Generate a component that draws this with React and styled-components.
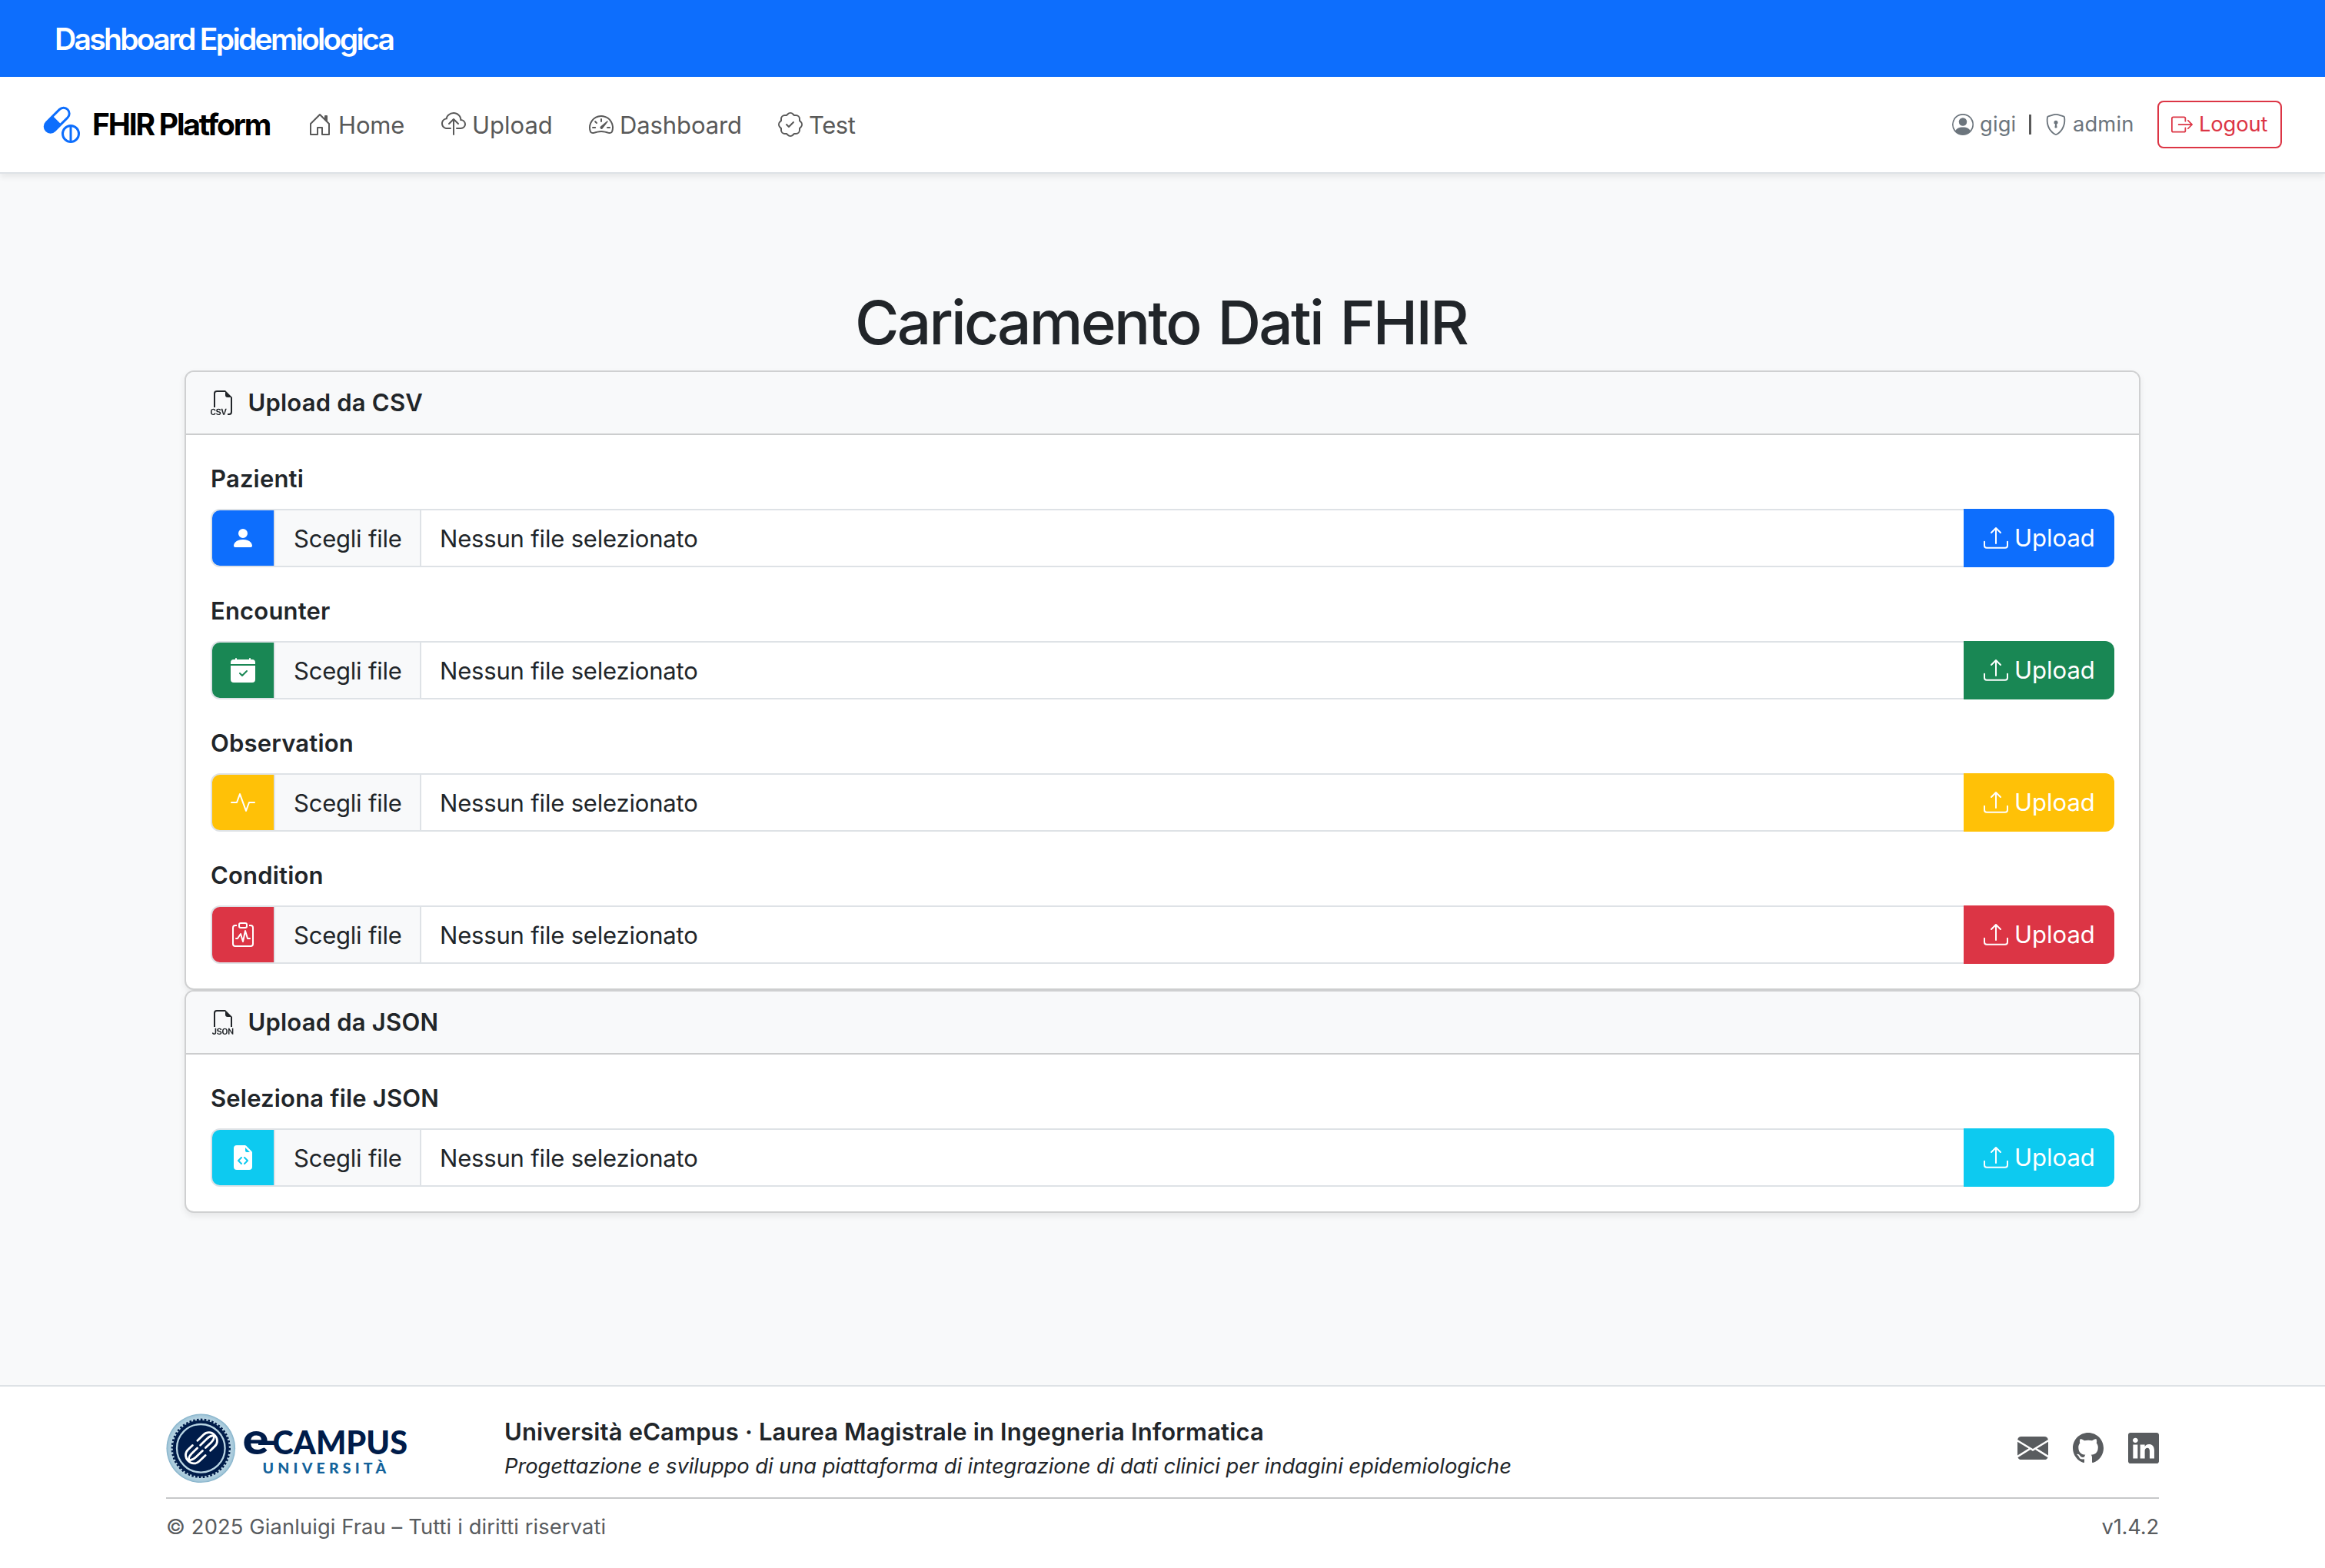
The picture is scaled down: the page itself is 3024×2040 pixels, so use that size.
import React from 'react';
import styled, { createGlobalStyle } from 'styled-components';
import {
  BsCapsulePill,
  BsHouseDoor,
  BsCloudUpload,
  BsSpeedometer2,
  BsPatchCheck,
  BsPersonCircle,
  BsShieldLock,
  BsBoxArrowRight,
  BsFiletypeCsv,
  BsFiletypeJson,
  BsPersonFill,
  BsCalendarCheckFill,
  BsActivity,
  BsClipboardPulse,
  BsFileEarmarkCodeFill,
  BsUpload,
  BsEnvelopeFill,
  BsGithub,
  BsLinkedin,
} from 'react-icons/bs';

const GlobalStyle = createGlobalStyle`
  *, *::before, *::after { box-sizing: border-box; }
  body {
    margin: 0;
    background: #f8f9fa;
    color: #212529;
    font-family: Inter, "Liberation Sans", sans-serif;
    font-size: 31px;
    line-height: 48px;
  }
  svg { display: block; flex: none; }
`;

const Page = styled.div`
  display: flex;
  flex-direction: column;
  min-height: 2040px;
`;

const TopBar = styled.div`
  display: flex;
  align-items: center;
  height: 100px;
  padding: 2px 71px 0;
  background: #0d6efd;
  color: #fff;
  font-size: 39px;
  font-weight: 600;
  letter-spacing: -2.67px;
`;

const Navbar = styled.nav`
  display: flex;
  align-items: center;
  height: 126px;
  padding: 0 56px;
  background: #fff;
  border-bottom: 2px solid #dee2e6;
  box-shadow: 0 4px 8px rgba(0, 0, 0, 0.075);
`;

const Brand = styled.a`
  display: flex;
  align-items: center;
  gap: 16px;
  width: 344px;
  color: #000;
  font-size: 39px;
  font-weight: 700;
  letter-spacing: -2.2px;
  white-space: nowrap;
  svg { color: #0d6efd; width: 48px; height: 48px; }
`;

const NavLink = styled.a`
  display: flex;
  align-items: center;
  gap: 8px;
  width: ${(p) => p.$width}px;
  color: #595959;
  letter-spacing: ${(p) => p.$tracking || 0}px;
  svg { width: 32px; height: 32px; }
`;

const LinkText = styled.span`
  padding-top: 1px;
`;

const Session = styled.div`
  display: flex;
  align-items: center;
  margin-left: auto;
  font-size: 27.3px;
  color: #595959;
`;

const SessionItem = styled.span`
  display: flex;
  align-items: center;
  gap: 8px;
  width: ${(p) => p.$width}px;
  color: #6c757d;
  letter-spacing: 0.15px;
  svg { width: 28px; height: 28px; }
`;

const Divider = styled.span`
  width: 24px;
  height: 26px;
  padding: 0 0 0 3px;
  &::before {
    content: "";
    display: block;
    width: 3px;
    height: 26px;
    background: #595959;
  }
`;

const LogoutButton = styled.button`
  display: flex;
  align-items: center;
  gap: 8px;
  width: 162px;
  height: 62px;
  padding: 0 0 0 16px;
  border: 2px solid #dc3545;
  border-radius: 8px;
  background: transparent;
  color: #dc3545;
  font: inherit;
  letter-spacing: -0.1px;
  svg { width: 28px; height: 28px; }
`;

const Main = styled.main`
  flex: 1;
  width: 2592px;
  margin: 0 auto;
  padding: 144px 24px 0;
`;

const Title = styled.h1`
  margin: 0 0 16px;
  padding: 3px 4px 0 0;
  font-size: 78.4px;
  font-weight: 500;
  line-height: 93px;
  letter-spacing: -2.8px;
  word-spacing: 4.5px;
  text-align: center;
`;

const Card = styled.section`
  border: 2px solid #cfd0d1;
  border-radius: 12px;
  background: #fff;
  box-shadow: 0 4px 8px rgba(0, 0, 0, 0.075);
  overflow: hidden;
`;

const CardHeader = styled.header`
  display: flex;
  align-items: center;
  gap: 16.5px;
  height: 82px;
  padding: 0 32px;
  background: #f8f9fa;
  border-bottom: 2px solid #cccdce;
  font-weight: 600;
  letter-spacing: 0.2px;
  svg { width: 32px; height: 32px; }
`;

const CardBody = styled.div`
  display: flex;
  flex-direction: column;
  gap: 32px;
  padding: 32px;
`;

const FieldLabel = styled.label`
  display: block;
  height: 48px;
  margin-bottom: 16px;
  padding-top: 1px;
  font-weight: 600;
  letter-spacing: 0.18px;
`;

const InputGroup = styled.div`
  display: flex;
  height: 76px;
`;

const Tile = styled.span`
  display: flex;
  align-items: center;
  justify-content: center;
  width: 84px;
  border: 2px solid #dee2e6;
  border-radius: 12px 0 0 12px;
  background: ${(p) => p.$tone};
  color: #fff;
  svg { width: 32px; height: 32px; }
`;

const FileInput = styled.div`
  display: flex;
  flex: 1;
  border: solid #dee2e6;
  border-width: 2px 0;
  background: #fff;
`;

const ChooseButton = styled.span`
  display: flex;
  align-items: center;
  width: 190px;
  padding: 1px 0 0 24px;
  border-right: 2px solid #dee2e6;
  background: #f8f9fa;
  letter-spacing: -0.22px;
`;

const FileName = styled.span`
  display: flex;
  align-items: center;
  padding: 1px 0 0 24px;
  letter-spacing: -0.18px;
`;

const UploadButton = styled.button`
  display: flex;
  align-items: center;
  gap: 8px;
  width: 196px;
  padding: 0 0 0 26px;
  border: 0;
  border-radius: 0 12px 12px 0;
  background: ${(p) => p.$tone};
  color: #fff;
  font: inherit;
  letter-spacing: 0;
  svg { width: 32px; height: 32px; }
`;

const Footer = styled.footer`
  height: 238px;
  padding-top: 32px;
  border-top: 2px solid #dee2e6;
  background: #fff;
`;

const FooterInner = styled.div`
  width: 2592px;
  margin: 0 auto;
`;

const FooterRow = styled.div`
  display: flex;
  align-items: center;
  height: 96px;
  margin-bottom: 16px;
`;

const LogoBox = styled.div`
  width: 440px;
`;

const Degree = styled.div`
  font-weight: 600;
  letter-spacing: 0.15px;
`;

const Thesis = styled.div`
  font-size: 27.3px;
  font-style: italic;
  line-height: 42px;
  letter-spacing: -0.05px;
`;

const Socials = styled.div`
  display: flex;
  gap: 32px;
  margin-left: auto;
  color: #595c5f;
  svg { width: 40px; height: 40px; }
`;

const Legal = styled.div`
  display: flex;
  justify-content: space-between;
  padding-top: 16px;
  border-top: 2px solid #c7c8c9;
  color: #595c5f;
  font-size: 27.3px;
  line-height: 42px;
  letter-spacing: 0.12px;
`;

const Version = styled.span`
  letter-spacing: -0.177px;
`;

function CampusLogo() {
  return (
    <svg width="316" height="96" viewBox="0 0 316 96">
      <defs>
        <radialGradient id="rim">
          <stop offset="0.84" stopColor="#b9d5e3" />
          <stop offset="0.95" stopColor="#a5c8da" />
          <stop offset="1" stopColor="#7fafc8" />
        </radialGradient>
      </defs>
      <circle cx="45.3" cy="48.3" r="44.8" fill="url(#rim)" />
      <circle cx="45.3" cy="48.3" r="36.6" fill="#001c4a" />
      <circle cx="45.3" cy="48.3" r="37.4" fill="none" stroke="#001c4a" strokeWidth="2.6" strokeDasharray="2.6 2.275" />
      <circle cx="45.3" cy="48.3" r="31.3" fill="none" stroke="#b9d5e3" strokeWidth="2.3" />
      <g transform="translate(46 47.8) rotate(-44)" fill="none" stroke="#fff" strokeWidth="2.8" strokeLinecap="round">
        <path d="M3 -10.5H14C20 -10.5 24 -6 24 0S20 10.5 14 10.5H6" />
        <path d="M1.5 -3.6H14Q20 -3.6 23 0Q20 3.6 14 3.6H4" />
        <path d="M-3 10.5H-14C-20 10.5 -24 6 -24 0S-20 -10.5 -14 -10.5H-6" />
        <path d="M-1.5 3.6H-14Q-20 3.6 -23 0Q-20 -3.6 -14 -3.6H-4" />
      </g>
      <g fontFamily="Lato, sans-serif" fill="#001c4a">
        <text x="99.5" y="56.2" fontSize="58" fontWeight="900" textLength="34" lengthAdjust="spacingAndGlyphs">e</text>
        <rect x="120" y="38.6" width="24" height="5.4" />
        <text x="138.5" y="56.2" fontSize="41.5" fontWeight="900" textLength="175.5" lengthAdjust="spacingAndGlyphs">CAMPUS</text>
      </g>
      <text x="125.5" y="80.7" fontFamily="Lato, sans-serif" fontSize="19.5" fontWeight="900" fill="#13629a" letterSpacing="5.2">UNIVERSITÀ</text>
    </svg>
  );
}

const BLUE = '#0d6efd';
const GREEN = '#198754';
const YELLOW = '#ffc107';
const RED = '#dc3545';
const CYAN = '#0dcaf0';

const csvFields = [
  { label: 'Pazienti', tone: BLUE, Icon: BsPersonFill },
  { label: 'Encounter', tone: GREEN, Icon: BsCalendarCheckFill },
  { label: 'Observation', tone: YELLOW, Icon: BsActivity },
  { label: 'Condition', tone: RED, Icon: BsClipboardPulse },
];

const jsonFields = [{ label: 'Seleziona file JSON', tone: CYAN, Icon: BsFileEarmarkCodeFill }];

function UploadField({ label, tone, Icon }) {
  return (
    <div>
      <FieldLabel>{label}</FieldLabel>
      <InputGroup>
        <Tile $tone={tone}><Icon /></Tile>
        <FileInput>
          <ChooseButton>Scegli file</ChooseButton>
          <FileName>Nessun file selezionato</FileName>
        </FileInput>
        <UploadButton $tone={tone}><BsUpload />Upload</UploadButton>
      </InputGroup>
    </div>
  );
}

function UploadCard({ title, Icon, fields }) {
  return (
    <Card>
      <CardHeader><Icon />{title}</CardHeader>
      <CardBody>
        {fields.map((f) => <UploadField key={f.label} {...f} />)}
      </CardBody>
    </Card>
  );
}

export default function App() {
  return (
    <Page>
      <GlobalStyle />
      <TopBar>Dashboard Epidemiologica</TopBar>
      <Navbar>
        <Brand><BsCapsulePill />FHIR Platform</Brand>
        <NavLink $width={174} $tracking={-0.16}><BsHouseDoor /><LinkText>Home</LinkText></NavLink>
        <NavLink $width={192}><BsCloudUpload /><LinkText>Upload</LinkText></NavLink>
        <NavLink $width={246} $tracking={-0.1}><BsSpeedometer2 /><LinkText>Dashboard</LinkText></NavLink>
        <NavLink $width={110} $tracking={-0.4}><BsPatchCheck /><LinkText>Test</LinkText></NavLink>
        <Session>
          <SessionItem $width={97}><BsPersonCircle />gigi</SessionItem>
          <Divider />
          <SessionItem $width={146}><BsShieldLock />admin</SessionItem>
          <LogoutButton><BsBoxArrowRight />Logout</LogoutButton>
        </Session>
      </Navbar>
      <Main>
        <Title>Caricamento Dati FHIR</Title>
        <UploadCard title="Upload da CSV" Icon={BsFiletypeCsv} fields={csvFields} />
        <UploadCard title="Upload da JSON" Icon={BsFiletypeJson} fields={jsonFields} />
      </Main>
      <Footer>
        <FooterInner>
          <FooterRow>
            <LogoBox><CampusLogo /></LogoBox>
            <div>
              <Degree>Università eCampus · Laurea Magistrale in Ingegneria Informatica</Degree>
              <Thesis>Progettazione e sviluppo di una piattaforma di integrazione di dati clinici per indagini epidemiologiche</Thesis>
            </div>
            <Socials><BsEnvelopeFill /><BsGithub /><BsLinkedin /></Socials>
          </FooterRow>
          <Legal>
            <span>© 2025 Gianluigi Frau – Tutti i diritti riservati</span>
            <Version>v1.4.2</Version>
          </Legal>
        </FooterInner>
      </Footer>
    </Page>
  );
}
